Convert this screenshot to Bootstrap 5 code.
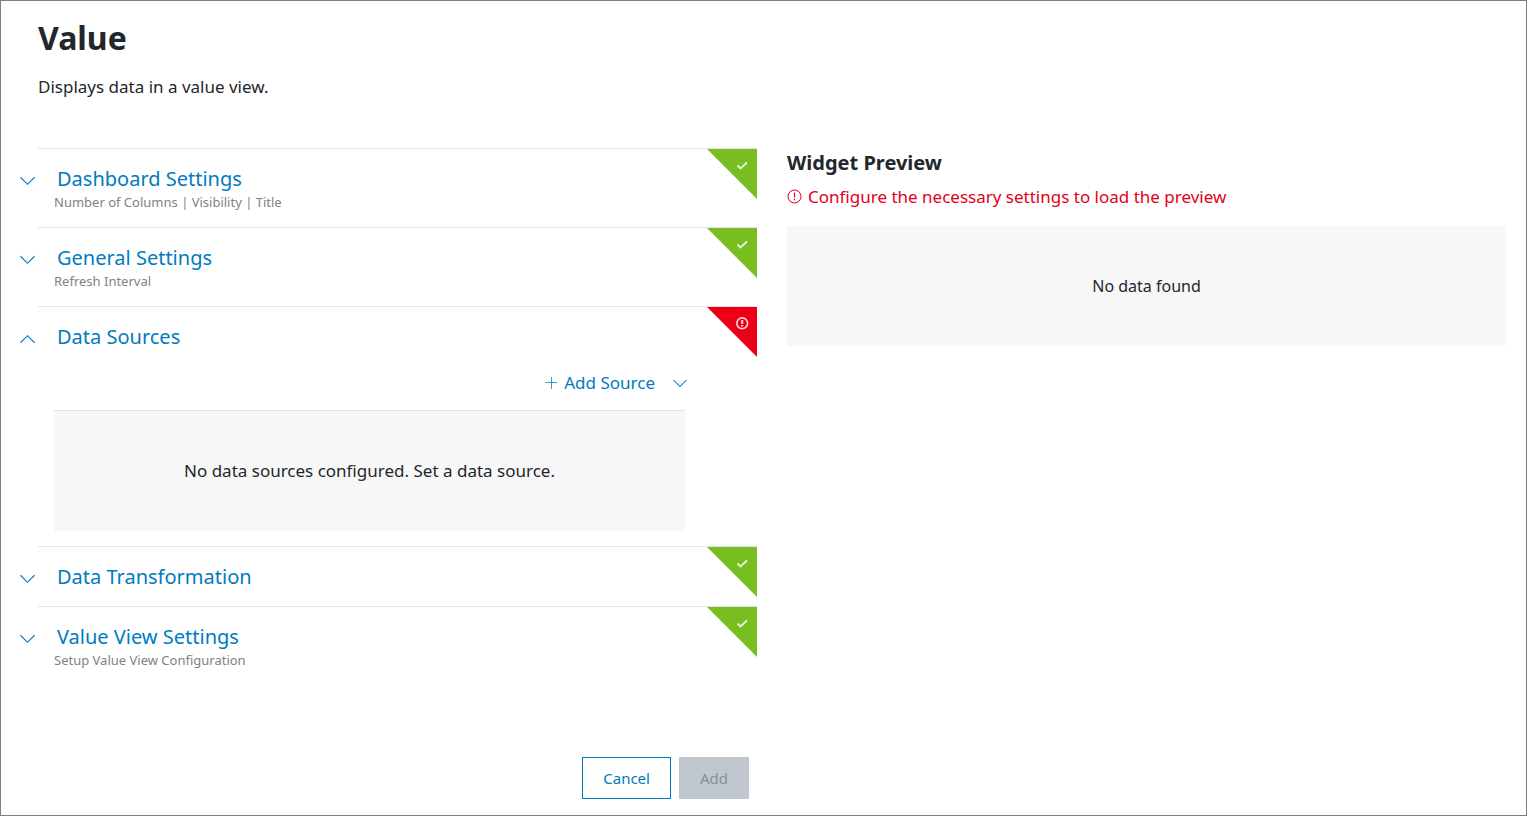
<!DOCTYPE html>
<html lang="en">
<head>
<meta charset="utf-8">
<meta name="viewport" content="width=device-width, initial-scale=1">
<title>Value</title>
<link href="https://cdn.jsdelivr.net/npm/bootstrap@5.3.0/dist/css/bootstrap.min.css" rel="stylesheet">
<style>
  body { font-family: "Noto Sans", "Open Sans", sans-serif; font-size: 17px; line-height: 24px; color: #23272b; background: #fff; }
  .page { border: 1px solid #7f7f7f; padding: 15px 20px 16px 37px; }
  .page-title { font-size: 32px; line-height: 44px; font-weight: 700; }
  .page-intro { margin: 15px 0 49px; }
  .columns { --bs-gutter-x: 30px; }
  .section { border-top: 1px solid #e4e5e6; position: relative; padding: 15px 16px; }
  .section-toggle { display: flex; align-items: center; border: 0; background: none; padding: 0; margin-left: -34px; gap: 22px; font-size: 20px; line-height: 29px; color: #007bc0; }
  .section-toggle svg { margin-top: 4px; }
  .section-hint { font-size: 13px; line-height: 19px; color: #808285; }
  .corner { position: absolute; top: 0; right: 0; width: 50px; height: 50px; }
  .source-bar { padding: 20px 0 15px; gap: 18px; margin-right: -2px; }
  .source-action { border: 0; background: none; padding: 0; gap: 7px; color: #007bc0; }
  .empty { background: #f7f7f7; height: 120px; }
  .sources { margin-right: 56px; }
  .sources .empty { border-top: 1px solid #e4e5e6; height: 121px; }
  .preview-title { font-size: 20px; line-height: 28px; font-weight: 700; padding-top: 1px; }
  .preview-alert { color: #e2001a; gap: 6px; margin: 8px 0 17px; }
  .preview-alert svg { margin-bottom: 2px; }
  .preview-body { font-size: 16px; }
  .btn-flat { --bs-btn-border-radius: 0; --bs-btn-padding-x: 20px; --bs-btn-padding-y: 10px; --bs-btn-font-size: 15px; --bs-btn-line-height: 20px;
    --bs-btn-color: #007bc0; --bs-btn-border-color: #007bc0; --bs-btn-hover-color: #005587; --bs-btn-hover-border-color: #005587;
    --bs-btn-disabled-bg: #c1c7cf; --bs-btn-disabled-border-color: #c1c7cf; --bs-btn-disabled-color: #8a9097; --bs-btn-disabled-opacity: 1; }
  .actions { padding: 40px 8px 0 0; }
</style>
</head>
<body>
<svg class="d-none" aria-hidden="true">
  <symbol id="chevron-down" viewBox="0 0 16 10"><path d="M.5 1 8 8.500 15.500 1" fill="none" stroke="currentColor" stroke-width="1.200"/></symbol>
  <symbol id="chevron-up" viewBox="0 0 16 10"><path d="M.5 9 8 1.500 15.500 9" fill="none" stroke="currentColor" stroke-width="1.200"/></symbol>
  <symbol id="corner-ok" viewBox="0 0 50 50"><path d="M0 0H50V50Z" fill="#78be20"/><path d="m30.500 16.500 3 3 6.500-6" fill="none" stroke="#e6f3d6" stroke-width="1.900"/></symbol>
  <symbol id="corner-error" viewBox="0 0 50 50"><path d="M0 0H50V50Z" fill="#ed0015"/><circle cx="35.200" cy="16.300" r="5.400" fill="none" stroke="#fbd5da" stroke-width="1.600"/><path d="M35.200 13v4M35.200 18v1.600" stroke="#fbd5da" stroke-width="2"/></symbol>
</svg>
<main class="page container-fluid min-vh-100 d-flex flex-column">
  <header>
    <h1 class="page-title mb-0">Value</h1>
    <p class="page-intro">Displays data in a value view.</p>
  </header>
  <div class="row columns flex-grow-1">
    <div class="col-6 d-flex flex-column">
      <section class="section">
        <button class="section-toggle" type="button" aria-expanded="false"><svg width="15" height="10"><use href="#chevron-down"/></svg>Dashboard Settings</button>
        <div class="section-hint">Number of Columns | Visibility | Title</div>
        <svg class="corner"><use href="#corner-ok"/></svg>
      </section>
      <section class="section">
        <button class="section-toggle" type="button" aria-expanded="false"><svg width="15" height="10"><use href="#chevron-down"/></svg>General Settings</button>
        <div class="section-hint">Refresh Interval</div>
        <svg class="corner"><use href="#corner-ok"/></svg>
      </section>
      <section class="section">
        <button class="section-toggle" type="button" aria-expanded="true"><svg width="15" height="10"><use href="#chevron-up"/></svg>Data Sources</button>
        <div class="sources">
          <div class="source-bar d-flex justify-content-end align-items-center">
            <button class="source-action d-flex align-items-center" type="button"><svg width="12" height="12" viewBox="0 0 12 12"><path d="M6.500 0v12M0 5.500h12" stroke="currentColor" fill="none" opacity=".75"/></svg>Add Source</button>
            <button class="source-action d-flex" type="button" aria-label="More sources"><svg width="14" height="9" viewBox="0 0 16 10"><use href="#chevron-down"/></svg></button>
          </div>
          <div class="empty d-flex align-items-center justify-content-center">No data sources configured. Set a data source.</div>
        </div>
        <svg class="corner"><use href="#corner-error"/></svg>
      </section>
      <section class="section">
        <button class="section-toggle" type="button" aria-expanded="false"><svg width="15" height="10"><use href="#chevron-down"/></svg>Data Transformation</button>
        <svg class="corner"><use href="#corner-ok"/></svg>
      </section>
      <section class="section">
        <button class="section-toggle" type="button" aria-expanded="false"><svg width="15" height="10"><use href="#chevron-down"/></svg>Value View Settings</button>
        <div class="section-hint">Setup Value View Configuration</div>
        <svg class="corner"><use href="#corner-ok"/></svg>
      </section>
      <div class="actions d-flex justify-content-end gap-2 mt-auto">
        <button class="btn btn-flat" type="button">Cancel</button>
        <button class="btn btn-flat" type="submit" disabled>Add</button>
      </div>
    </div>
    <div class="col-6">
      <h2 class="preview-title mb-0">Widget Preview</h2>
      <p class="preview-alert d-flex align-items-center"><svg width="15" height="15" viewBox="0 0 15 15"><circle cx="7.500" cy="7.500" r="6.500" fill="none" stroke="currentColor"/><path d="M7.500 3.500v5M7.500 9.800v1.400" stroke="currentColor" stroke-width="1.200"/></svg>Configure the necessary settings to load the preview</p>
      <div class="preview-body empty d-flex align-items-center justify-content-center">No data found</div>
    </div>
  </div>
</main>
<script src="https://cdn.jsdelivr.net/npm/bootstrap@5.3.0/dist/js/bootstrap.bundle.min.js"></script>
</body>
</html>
